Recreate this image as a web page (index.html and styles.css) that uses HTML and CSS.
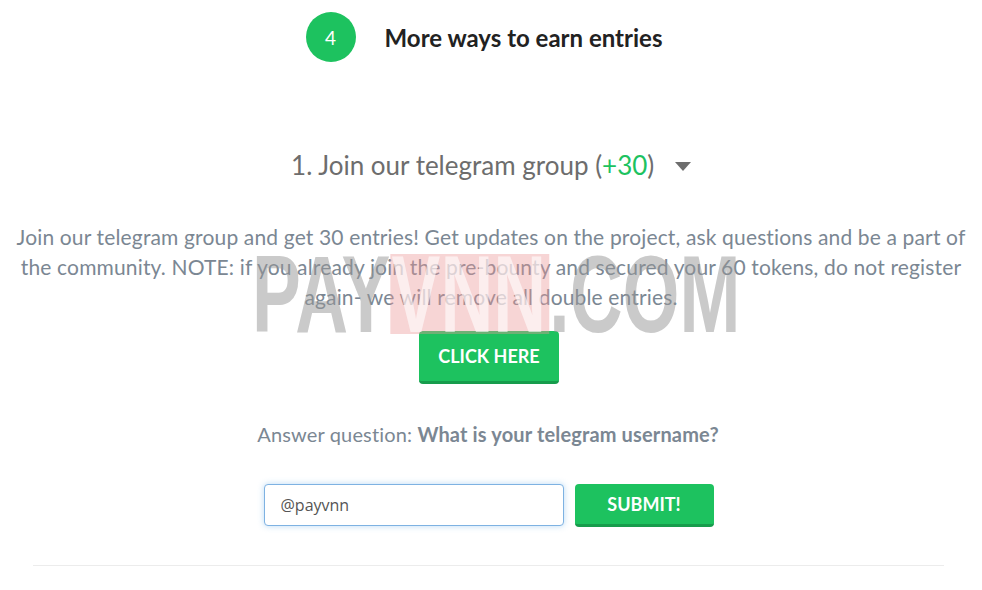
FILE: index.html
```html
<!DOCTYPE html>
<html lang="en">
<head>
  <meta charset="UTF-8" />
  <title>More ways to earn entries</title>
  <link rel="stylesheet" href="styles.css">
</head>
<body>

  <div class="step">
    <span class="step-num">4</span>
    <h2>More ways to earn entries</h2>
  </div>

  <div class="task">
    <h3 class="task-title">1. Join our telegram group (<span class="pts">+30</span>) <span class="caret"></span></h3>

    <p class="task-text">Join our telegram group and get 30 entries! Get updates on the project, ask questions and be a part of the community. NOTE: if you already join the pre-bounty and secured your 60 tokens, do not register again- we will remove all double entries.</p>

    <a class="btn btn-click" href="#">CLICK HERE</a>

    <p class="question">Answer question: <b>What is your telegram username?</b></p>

    <form class="answer" autocomplete="off">
      <input type="text" value="@payvnn">
      <button type="submit" class="btn">SUBMIT!</button>
    </form>
  </div>

  <hr class="divider">

  <!-- watermark -->
  <div class="mark"><span>PAY</span><span class="mark-box">VNN</span><span>.COM</span></div>

</body>
</html>
```

FILE: styles.css
```css
:root{
  --green:#1dc25f;
  --green-dark:#179c4c;
  --text:#7b8793;
}
*{box-sizing:border-box;margin:0;padding:0}
body{
  background:#fff;
  font-family:Lato,"Open Sans",Arial,sans-serif;
  color:var(--text);
  position:relative;
}
.step{
  display:flex;
  align-items:center;
  justify-content:center;
  gap:29px;
  padding-top:12px;
  padding-right:14px;
}
.step-num{
  width:50px;height:50px;
  border-radius:50%;
  background:var(--green);
  color:#fff;
  font-size:19px;
  display:flex;align-items:center;justify-content:center;
}
.step h2{font-size:24px;font-weight:700;color:#222}

.task{text-align:center;padding:0 14px}
.task-title{
  margin-top:86px;
  font-size:26px;
  font-weight:400;
  color:#6d6d6d;
  line-height:34px;
}
.pts{color:var(--green)}
.caret{
  display:inline-block;
  width:0;height:0;
  border-left:8px solid transparent;
  border-right:8px solid transparent;
  border-top:9px solid #6d6d6d;
  margin-left:14px;
  vertical-align:middle;
  position:relative;top:-2px;
}
.task-text{
  margin-top:40px;
  font-size:21px;
  letter-spacing:.15px;
  line-height:30px;
}
.btn{
  display:inline-block;
  background:var(--green);
  color:#fff;
  font-family:Lato,Arial,sans-serif;
  font-weight:700;
  font-size:18px;
  border:none;
  border-bottom:3px solid var(--green-dark);
  border-radius:4px;
  text-decoration:none;
  cursor:pointer;
}
.btn-click{
  margin-top:19px;
  margin-right:4px;
  width:140px;
  height:53px;
  line-height:50px;
}
.question{
  margin-top:38px;
  font-size:20px;
  line-height:24px;
  letter-spacing:.15px;
  padding-right:6px;
}
.question b{font-weight:700}
.answer{
  margin-top:38px;
  display:flex;
  justify-content:center;
  gap:11px;
  padding-right:5px;
}
.answer input{
  width:300px;height:42px;
  border:1px solid #7eb2e2;
  border-radius:4px;
  box-shadow:0 0 6px rgba(102,175,233,.45);
  padding:0 16px;
  font-family:"Open Sans",Arial,sans-serif;
  font-size:16px;
  color:#555;
  outline:none;
}
.answer .btn{width:139px;height:43px}
.divider{
  margin:38px 38px 0 33px;
  border:none;
  border-top:1px solid #ececec;
}

/* watermark */
.mark{
  position:absolute;
  left:252px;top:254px;
  font-family:"Liberation Sans",Arial,sans-serif;
  font-weight:700;
  font-size:110px;
  line-height:80px;
  height:80px;
  color:rgba(150,150,150,.5);
  transform:scaleX(.665);
  transform-origin:left top;
  white-space:nowrap;
  pointer-events:none;
}
.mark span{display:inline-block;height:80px;vertical-align:top}
.mark-box{
  background:rgba(235,150,150,.4);
  color:rgba(255,255,255,.6);
  padding:0 5px 0 2px;
}
```
